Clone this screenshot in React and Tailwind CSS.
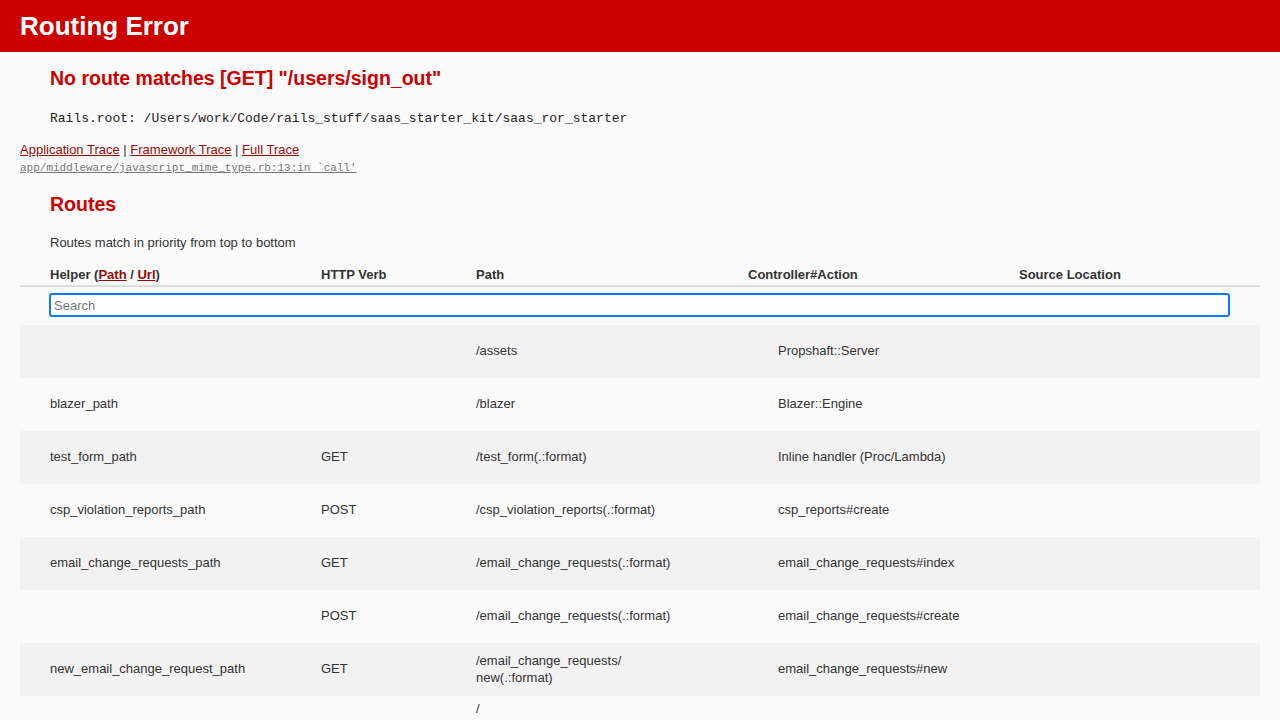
import React from 'react';

const routes = [
  { helper: '', verb: '', path: ['/assets'], action: 'Propshaft::Server' },
  { helper: 'blazer_path', verb: '', path: ['/blazer'], action: 'Blazer::Engine' },
  { helper: 'test_form_path', verb: 'GET', path: ['/test_form(.:format)'], action: 'Inline handler (Proc/Lambda)' },
  { helper: 'csp_violation_reports_path', verb: 'POST', path: ['/csp_violation_reports(.:format)'], action: 'csp_reports#create' },
  { helper: 'email_change_requests_path', verb: 'GET', path: ['/email_change_requests(.:format)'], action: 'email_change_requests#index' },
  { helper: '', verb: 'POST', path: ['/email_change_requests(.:format)'], action: 'email_change_requests#create' },
  { helper: 'new_email_change_request_path', verb: 'GET', path: ['/email_change_requests/', 'new(.:format)'], action: 'email_change_requests#new' },
  {
    helper: 'confirm_email_change_request_path',
    verb: 'GET',
    path: ['/', 'email_change_requests/', ':token/', 'confirm(.:format)'],
    action: 'email_change_requests#confirm',
    tight: true,
  },
];

function RouteRow({ route, index }) {
  return (
    <div
      className={`flex items-center min-h-[53px] pl-[30px] ${route.tight ? 'pt-[4px] pb-[10px]' : 'pt-[8px] pb-[10px]'} ${
        index % 2 === 0 ? 'bg-[#f2f2f2]' : 'bg-[#fafafa]'
      }`}
    >
      <div className="w-[271px] shrink-0">{route.helper}</div>
      <div className="w-[155px] shrink-0">{route.verb}</div>
      <div className="w-[302px] shrink-0 leading-[17px]">
        {route.path.map((line, i) => (
          <div key={i}>{line}</div>
        ))}
      </div>
      <div className="flex-1">{route.action}</div>
    </div>
  );
}

export default function App() {
  return (
    <div className="min-h-[720px] bg-[#fafafa] text-[13px] leading-[16px] text-[#333] font-['Liberation_Sans',Arial,sans-serif]">
      <header className="h-[52px] bg-[#cc0000] flex items-center px-5">
        <h1 className="text-[26px] font-bold leading-none text-white">Routing Error</h1>
      </header>

      <div className="px-5">
        <h2 className="mt-[14px] pl-[30px] text-[19.5px] leading-[24px] font-bold text-[#cc0000]">
          No route matches [GET] "/users/sign_out"
        </h2>

        <pre className="mt-[21px] pl-[30px] font-['Liberation_Mono',monospace] text-[13px] leading-[16px] text-[#222]">
          Rails.root: /Users/work/Code/rails_stuff/saas_starter_kit/saas_ror_starter
        </pre>

        <div className="mt-[15px] text-[#980905]">
          <a href="#" className="underline">Application Trace</a>
          <span className="text-[#333]"> | </span>
          <a href="#" className="underline">Framework Trace</a>
          <span className="text-[#333]"> | </span>
          <a href="#" className="underline">Full Trace</a>
        </div>

        <div className="mt-[3px] font-['Liberation_Mono',monospace] text-[11px] leading-[14px] text-[#777] underline">
          app/middleware/javascript_mime_type.rb:13:in `call'
        </div>

        <h2 className="mt-[17px] pl-[30px] text-[19.5px] leading-[24px] font-bold text-[#cc0000]">Routes</h2>

        <p className="mt-[19px] pl-[30px]">Routes match in priority from top to bottom</p>

        <div className="mt-[16px] w-[1240px]">
          <div className="flex pl-[30px] pb-[2px] border-b-2 border-[#dddddd] font-bold">
            <div className="w-[271px] shrink-0">
              Helper (<a href="#" className="underline text-[#980905]">Path</a> /{' '}
              <a href="#" className="underline text-[#980905]">Url</a>)
            </div>
            <div className="w-[155px] shrink-0">HTTP Verb</div>
            <div className="w-[272px] shrink-0">Path</div>
            <div className="w-[271px] shrink-0">Controller#Action</div>
            <div className="flex-1">Source Location</div>
          </div>

          <div className="pt-[6px] pb-[8px] pl-[29px]">
            <input
              type="text"
              placeholder="Search"
              className="block w-[1181px] h-[24px] px-[3px] bg-white border-2 border-[#0a7aff] rounded-[3px] text-[13px] outline-none placeholder:text-[#757575]"
            />
          </div>

          {routes.map((route, i) => (
            <RouteRow key={i} route={route} index={i} />
          ))}
        </div>
      </div>
    </div>
  );
}
